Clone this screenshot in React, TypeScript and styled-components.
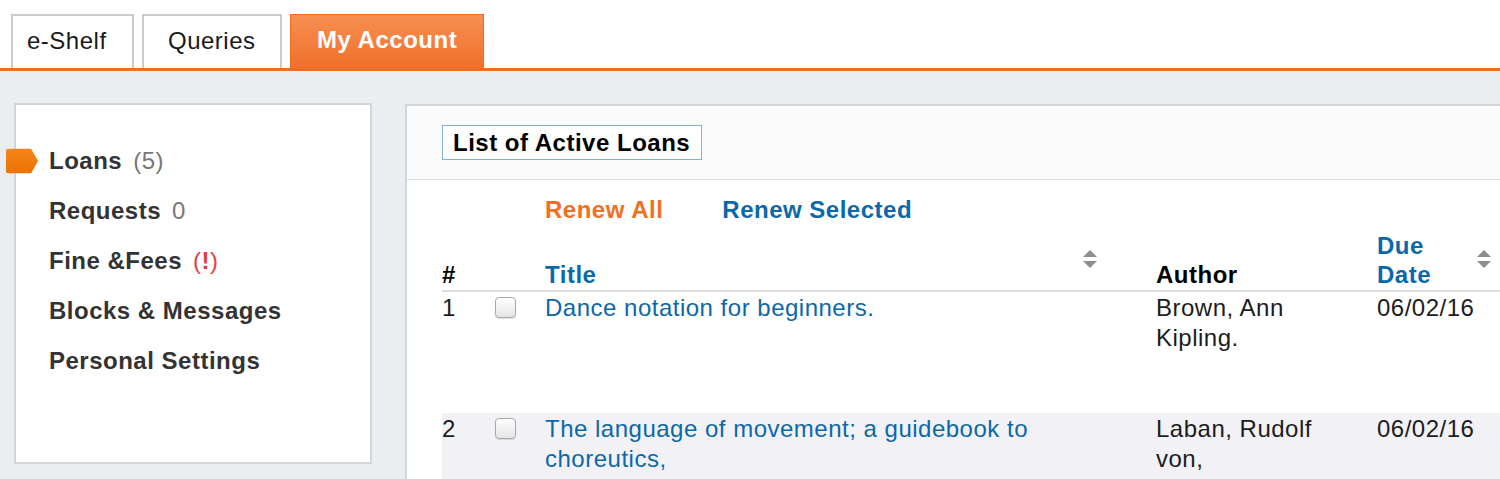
import React from "react";
import styled, { createGlobalStyle } from "styled-components";

const GlobalStyle = createGlobalStyle`
  html, body { margin: 0; padding: 0; background: #ffffff; overflow: hidden; }
  body {
    font-family: "Liberation Sans", Arial, Helvetica, sans-serif;
    font-size: 24px;
    letter-spacing: 0.5px;
    color: #222;
  }
  * { box-sizing: border-box; }
`;

const Page = styled.div`
  width: 1500px;
  height: 479px;
  overflow: hidden;
  display: flex;
  flex-direction: column;
`;

const TabBar = styled.div`
  display: flex;
  align-items: flex-end;
  gap: 8px;
  padding: 14px 0 0 11px;
  border-bottom: 3px solid #f26c22;
  flex: 0 0 auto;
`;

const Tab = styled.div<{ $width: number; $pad: number; $active?: boolean }>`
  width: ${(p) => p.$width}px;
  height: 54px;
  display: flex;
  align-items: center;
  padding-left: ${(p) => p.$pad}px;
  padding-bottom: 3px;
  font-size: 24px;
  border: ${(p) => (p.$active ? "1px solid #f06a20" : "2px solid #cbcbcb")};
  border-bottom: none;
  color: ${(p) => (p.$active ? "#ffffff" : "#1a1a1a")};
  font-weight: ${(p) => (p.$active ? 700 : 400)};
  background: ${(p) =>
    p.$active ? "linear-gradient(#f78f52, #f0702a)" : "#ffffff"};
`;

const Main = styled.div`
  flex: 1 1 auto;
  background: #ebeef1;
  display: flex;
  align-items: flex-start;
  gap: 33px;
  padding: 32px 0 0 14px;
`;

const Sidebar = styled.nav`
  flex: 0 0 358px;
  height: 361px;
  background: #ffffff;
  border: 2px solid #d3d6d9;
  padding: 31px 0 0 33px;
`;

const NavItem = styled.div`
  position: relative;
  height: 50px;
  display: flex;
  align-items: center;
  gap: 11px;
  font-weight: 700;
  color: #333333;
`;

const Marker = styled.svg`
  position: absolute;
  left: -43px;
  top: 50%;
  transform: translateY(-50%);
`;

const Count = styled.span`
  font-weight: 400;
  color: #777777;
`;

const Alert = styled.span`
  font-weight: 400;
  color: #e63c43;
  b { font-weight: 700; }
`;

const Panel = styled.section`
  flex: 0 0 1150px;
  align-self: stretch;
  margin-top: 1px;
  background: #ffffff;
  border: 2px solid #d3d6d9;
  border-right: none;
  border-bottom: none;
`;

const PanelHeader = styled.div`
  background: #fbfbfb;
  padding: 19px 0 19px 35px;
  border-bottom: 1px solid #dcdde0;
`;

const Heading = styled.h2`
  margin: 0;
  width: 260px;
  height: 35px;
  line-height: 33px;
  padding: 0 0 0 10px;
  border: 1px solid #80b2d2;
  background: #ffffff;
  font-size: 24px;
  font-weight: 700;
  color: #000;
`;

const PanelBody = styled.div`
  padding: 15px 0 0 35px;
`;

const Actions = styled.div`
  display: flex;
  gap: 59px;
  padding-left: 103px;
  margin-bottom: 7px;
  line-height: 29px;
  font-weight: 700;
`;

const Action = styled.span<{ $tone: "orange" | "blue" }>`
  color: ${(p) => (p.$tone === "orange" ? "#f26f22" : "#0a69ab")};
`;

const GRID = "53px 50px 611px 221px 175px";

const HeadRow = styled.div`
  display: grid;
  grid-template-columns: ${GRID};
  border-bottom: 2px solid #dcdde0;
  line-height: 29px;
  font-weight: 700;
`;

const HeadCell = styled.div<{ $blue?: boolean; $padRight?: number }>`
  display: flex;
  align-items: flex-end;
  padding: 0 ${(p) => p.$padRight ?? 0}px 1px 0;
  color: ${(p) => (p.$blue ? "#0a69ab" : "#000")};
`;

const HeadLabel = styled.span`
  flex: 1 1 auto;
`;

const SortIcon = styled.svg`
  flex: 0 0 14px;
  align-self: center;
  margin-top: -2px;
`;

const Row = styled.div<{ $shaded?: boolean }>`
  display: grid;
  grid-template-columns: ${GRID};
  min-height: 121px;
  line-height: 29.5px;
  background: ${(p) => (p.$shaded ? "#f2f2f6" : "#ffffff")};
`;

const Cell = styled.div<{ $padRight?: number }>`
  padding: 1px ${(p) => p.$padRight ?? 30}px 0 0;
  color: #1c1c1c;
`;

const CheckCell = styled.div`
  padding-top: 5px;
`;

const Check = styled.input`
  appearance: none;
  -webkit-appearance: none;
  margin: 0;
  display: block;
  width: 21px;
  height: 21px;
  border: 1px solid #a9a9a9;
  border-radius: 4px;
  background: linear-gradient(#ffffff, #e4e4e4);
  box-shadow: 0 1px 1px rgba(0, 0, 0, 0.12);
`;

const TitleLink = styled.a`
  color: #0b68a8;
  text-decoration: none;
`;

const Sort = () => (
  <SortIcon width="14" height="18" viewBox="0 0 14 18">
    <polygon points="7,0 14,7 0,7" fill="#8e8e8e" />
    <polygon points="0,11 14,11 7,18" fill="#8e8e8e" />
  </SortIcon>
);

const loans = [
  {
    n: 1,
    title: "Dance notation for beginners.",
    author: "Brown, Ann Kipling.",
    due: "06/02/16",
  },
  {
    n: 2,
    title: "The language of movement; a guidebook to choreutics,",
    author: "Laban, Rudolf von,",
    due: "06/02/16",
  },
];

export default function App() {
  return (
    <Page>
      <GlobalStyle />
      <TabBar>
        <Tab $width={123} $pad={14}>e-Shelf</Tab>
        <Tab $width={140} $pad={24}>Queries</Tab>
        <Tab $width={194} $pad={26} $active>
          My Account
        </Tab>
      </TabBar>
      <Main>
        <Sidebar>
          <NavItem>
            <Marker width="32" height="25" viewBox="0 0 32 25">
              <defs>
                <linearGradient id="mk" x1="0" y1="0" x2="0" y2="1">
                  <stop offset="0" stopColor="#f5851e" />
                  <stop offset="1" stopColor="#eb7300" />
                </linearGradient>
              </defs>
              <path
                d="M3 0 H25 L32 12.5 L25 25 H3 Q0 25 0 22 V3 Q0 0 3 0 Z"
                fill="url(#mk)"
              />
            </Marker>
            Loans <Count>(5)</Count>
          </NavItem>
          <NavItem>
            Requests <Count>0</Count>
          </NavItem>
          <NavItem>
            Fine &amp;Fees{" "}
            <Alert>
              (<b>!</b>)
            </Alert>
          </NavItem>
          <NavItem>Blocks &amp; Messages</NavItem>
          <NavItem>Personal Settings</NavItem>
        </Sidebar>
        <Panel>
          <PanelHeader>
            <Heading>List of Active Loans</Heading>
          </PanelHeader>
          <PanelBody>
            <Actions>
              <Action $tone="orange">Renew All</Action>
              <Action $tone="blue">Renew Selected</Action>
            </Actions>
            <HeadRow>
              <HeadCell>#</HeadCell>
              <HeadCell />
              <HeadCell $blue $padRight={59}>
                <HeadLabel>Title</HeadLabel>
                <Sort />
              </HeadCell>
              <HeadCell>Author</HeadCell>
              <HeadCell $blue $padRight={61}>
                <HeadLabel>Due Date</HeadLabel>
                <Sort />
              </HeadCell>
            </HeadRow>
            {loans.map((l, i) => (
              <Row key={l.n} $shaded={i % 2 === 1}>
                <Cell>{l.n}</Cell>
                <CheckCell>
                  <Check type="checkbox" aria-label={`Select loan ${l.n}`} />
                </CheckCell>
                <Cell $padRight={50}>
                  <TitleLink href="#">{l.title}</TitleLink>
                </Cell>
                <Cell>{l.author}</Cell>
                <Cell>{l.due}</Cell>
              </Row>
            ))}
          </PanelBody>
        </Panel>
      </Main>
    </Page>
  );
}
